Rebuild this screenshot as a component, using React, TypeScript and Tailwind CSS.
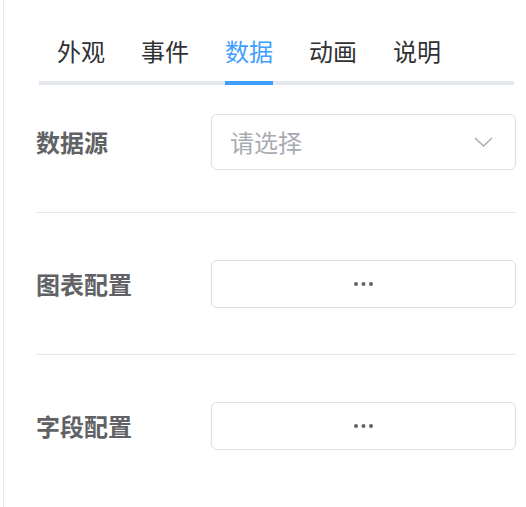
import { useState } from "react";

const tabs = ["外观", "事件", "数据", "动画", "说明"];

const font = { fontFamily: '"Noto Sans CJK SC", "Noto Sans", sans-serif' };

function Dots() {
  return (
    <svg width="19" height="4" viewBox="0 0 19 4" fill="#606266">
      <circle cx="2" cy="2" r="2" />
      <circle cx="9.5" cy="2" r="2" />
      <circle cx="17" cy="2" r="2" />
    </svg>
  );
}

function Chevron() {
  return (
    <svg width="19" height="10" viewBox="0 0 19 10" fill="none" stroke="#a8abb2" strokeWidth="1.4">
      <path d="M1 1l8.5 8 8.5-8" />
    </svg>
  );
}

export default function App() {
  const [active, setActive] = useState(2);

  return (
    <div className="flex h-[507px] w-[526px] bg-white" style={font}>
      <div className="ml-[3px] w-px bg-[#e4e7ed]" />
      <div className="flex flex-1 flex-col">
        {/* tabs */}
        <div className="ml-[35px] mr-[12px] flex gap-[36px] border-b-4 border-[#e4e7ed] pl-[18px]">
          {tabs.map((t, i) => (
            <button
              key={t}
              onClick={() => setActive(i)}
              className={
                "-mb-[4px] border-b-4 pt-[39px] pb-[18px] text-[24px] leading-[24px] " +
                (i === active
                  ? "border-[#409eff] text-[#409eff]"
                  : "border-transparent text-[#303133]")
              }
            >
              {t}
            </button>
          ))}
        </div>

        {/* form */}
        <div className="ml-[32px] mr-[10px] flex flex-col">
          <div className="flex items-center border-b border-[#e4e7ed] pt-[29px] pb-[42px]">
            <div className="w-[175px] text-[24px] font-bold leading-[24px] text-[#606266]">数据源</div>
            <div className="flex h-[56px] flex-1 items-center justify-between rounded-[6px] border border-[#dcdfe6] pl-[18px] pr-[22px]">
              <span className="text-[24px] leading-[24px] text-[#a8abb2]">请选择</span>
              <Chevron />
            </div>
          </div>

          <div className="flex items-center border-b border-[#e4e7ed] pt-[47px] pb-[46px]">
            <div className="w-[175px] text-[24px] font-bold leading-[24px] text-[#606266]">图表配置</div>
            <button className="flex h-[48px] flex-1 items-center justify-center rounded-[6px] border border-[#dcdfe6] bg-white">
              <Dots />
            </button>
          </div>

          <div className="flex items-center pt-[47px]">
            <div className="w-[175px] text-[24px] font-bold leading-[24px] text-[#606266]">字段配置</div>
            <button className="flex h-[48px] flex-1 items-center justify-center rounded-[6px] border border-[#dcdfe6] bg-white">
              <Dots />
            </button>
          </div>
        </div>
      </div>
    </div>
  );
}
